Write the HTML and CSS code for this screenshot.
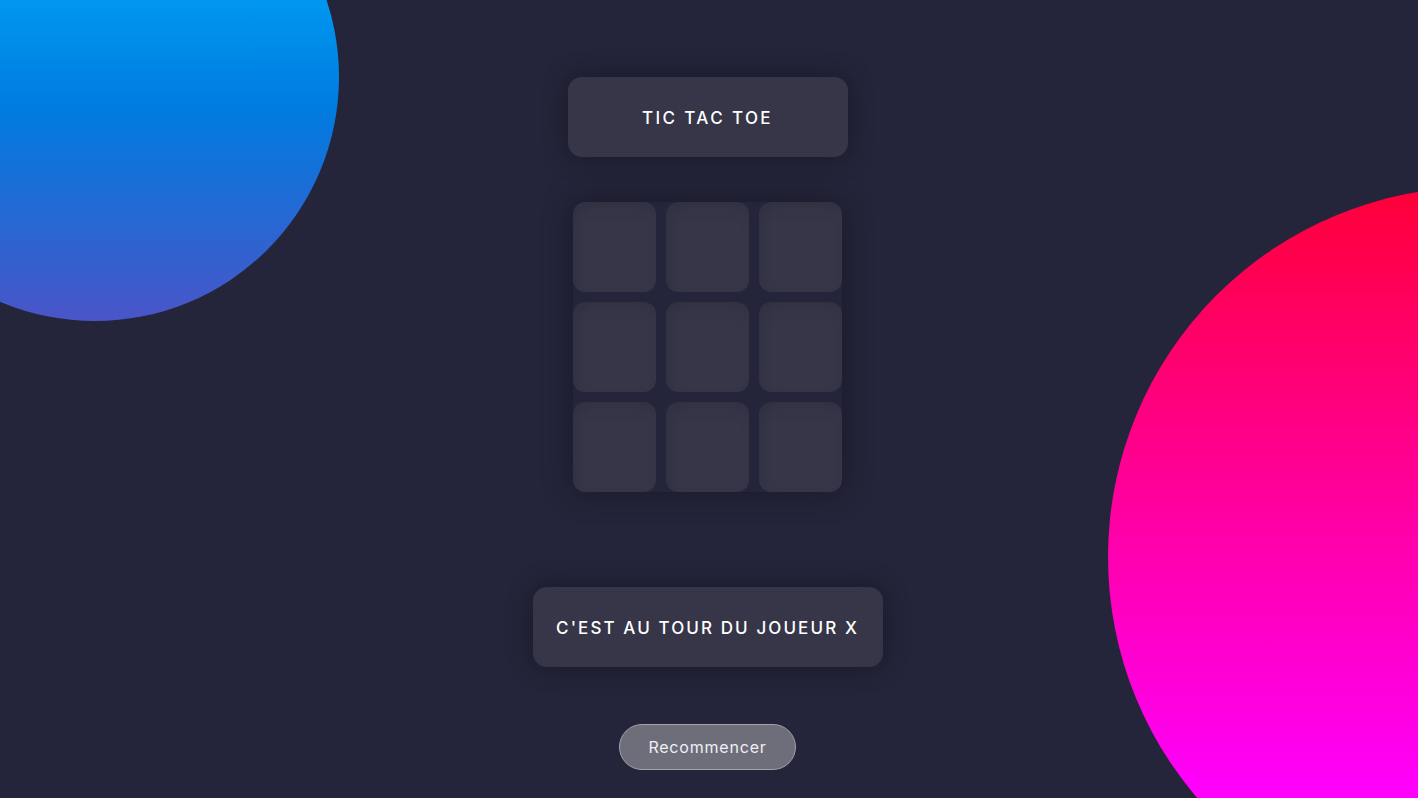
FILE: index.html
```html
<!DOCTYPE html>
<html lang="fr">
<head>
<meta charset="utf-8">
<title>Tic Tac Toe</title>
<link rel="stylesheet" href="styles.css">
</head>
<body>
<div class="backdrop">
  <div class="blob blob-blue"></div>
  <div class="blob blob-pink"></div>
</div>
<main class="game">
  <h1 class="title">TIC TAC TOE</h1>
  <div class="board">
    <div class="cell"></div>
    <div class="cell"></div>
    <div class="cell"></div>
    <div class="cell"></div>
    <div class="cell"></div>
    <div class="cell"></div>
    <div class="cell"></div>
    <div class="cell"></div>
    <div class="cell"></div>
  </div>
  <p class="status">C'EST AU TOUR DU JOUEUR X</p>
  <button class="restart">Recommencer</button>
</main>
</body>
</html>
```

FILE: styles.css
```css
* { box-sizing: border-box; }
html, body {
  margin: 0;
  height: 100%;
  overflow: hidden;
}
body {
  background: #24243a;
  font-family: "Inter", "Open Sans", sans-serif;
  color: #fff;
  position: relative;
}
.backdrop {
  position: absolute;
  inset: 0;
  overflow: hidden;
  z-index: 0;
}
.blob {
  position: absolute;
  border-radius: 50%;
}
.blob-blue {
  left: -149px;
  top: -167px;
  width: 488px;
  height: 488px;
  background: linear-gradient(to bottom, #00b0ff 0%, #0097f0 34%, #007bdf 57%, #4a55c8 100%);
}
.blob-pink {
  left: 1108px;
  top: 187px;
  width: 740px;
  height: 740px;
  background: linear-gradient(to bottom, #ff0038 0%, #ff00ff 83%);
}
.game {
  position: relative;
  z-index: 1;
  display: flex;
  flex-direction: column;
  align-items: center;
  padding-top: 77px;
  padding-right: 3px;
}
.title {
  margin: 0;
  width: 280px;
  height: 80px;
  display: flex;
  align-items: center;
  justify-content: center;
  padding-top: 1px;
  background: #363648;
  border-radius: 14px;
  font-size: 17px;
  font-weight: 500;
  letter-spacing: 2.4px;
  box-shadow: 0 0 22px rgba(20, 20, 34, 0.6);
}
.board {
  margin-top: 45px;
  display: grid;
  grid-template-columns: repeat(3, 83px);
  grid-auto-rows: 90px;
  gap: 10px;
  border-radius: 14px;
  box-shadow: 0 0 28px rgba(20, 20, 34, 0.6);
}
.cell {
  background: #363648;
  border-radius: 12px;
  box-shadow: inset 0 12px 14px -8px rgba(40, 40, 58, 0.35), inset 8px 0 12px -8px rgba(40, 40, 58, 0.25);
}
.status {
  margin: 95px 0 0;
  width: 350px;
  height: 80px;
  display: flex;
  align-items: center;
  justify-content: center;
  padding-top: 1px;
  background: #363648;
  border-radius: 14px;
  font-size: 17px;
  font-weight: 500;
  letter-spacing: 2.1px;
  box-shadow: 0 0 22px rgba(20, 20, 34, 0.6);
}
.restart {
  margin-top: 57px;
  width: 177px;
  height: 46px;
  padding: 0;
  border-radius: 23px;
  background: #6e6e7b;
  border: 1px solid #a2a2ad;
  color: #eeeef5;
  font-family: "Inter", "Open Sans", sans-serif;
  font-size: 16px;
  font-weight: 400;
  letter-spacing: 0.8px;
}
```
